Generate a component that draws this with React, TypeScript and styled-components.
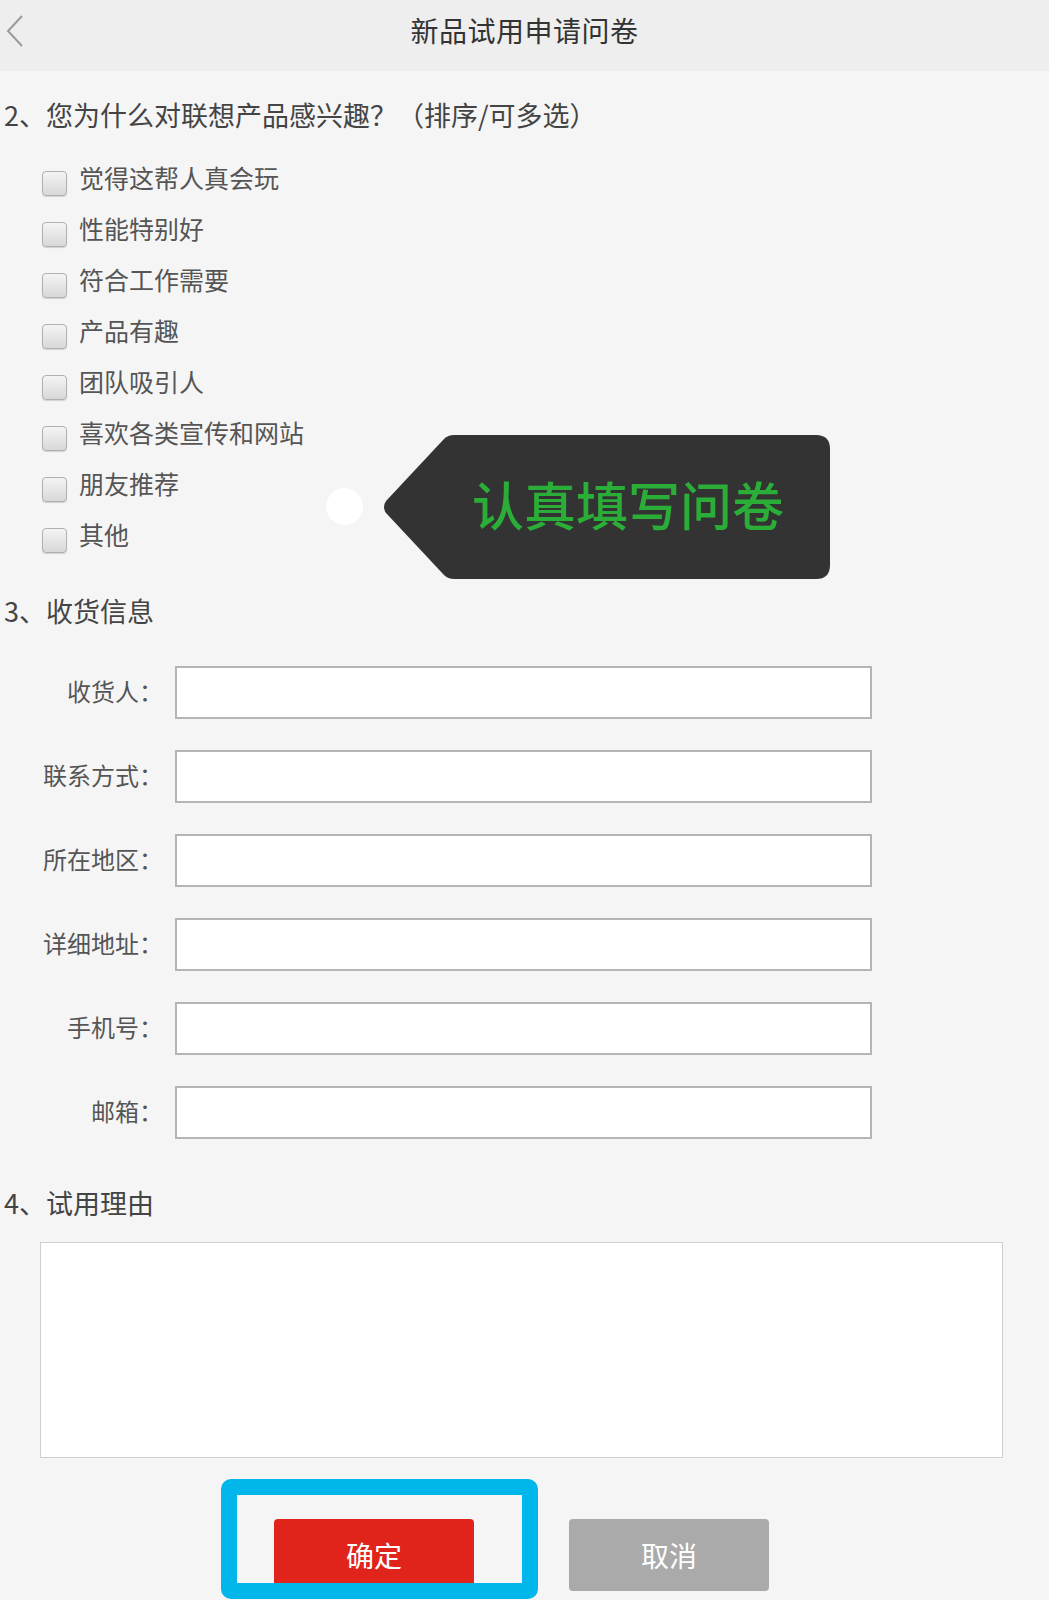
import { createGlobalStyle, styled } from "styled-components";

const GlobalStyle = createGlobalStyle`
  html, body {
    margin: 0;
    padding: 0;
    background: #f5f5f5;
  }
  body {
    font-family: "Noto Sans CJK SC", "Noto Sans", "Liberation Sans", sans-serif;
  }
`;

const Page = styled.div`
  width: 1049px;
  height: 1600px;
  overflow: hidden;
  background: #f5f5f5;
  display: flex;
  flex-direction: column;
`;

const Header = styled.div`
  height: 71px;
  flex-shrink: 0;
  background: #eeeeee;
  position: relative;
  display: flex;
  align-items: center;
  justify-content: center;
`;

const BackIcon = styled.svg`
  position: absolute;
  left: 4px;
  top: 14px;
`;

const HeaderTitle = styled.div`
  font-size: 28px;
  color: #333;
  letter-spacing: 0.5px;
  margin-bottom: 12px;
`;

const Question = styled.div<{ mt: number }>`
  margin-top: ${({ mt }) => mt}px;
  padding-left: 4px;
  height: 40px;
  line-height: 40px;
  font-size: 27px;
  color: #444;
`;

const Options = styled.div`
  position: relative;
  margin-top: 23px;
  display: flex;
  flex-direction: column;
`;

const OptionRow = styled.label`
  height: 51px;
  display: flex;
  align-items: center;
  padding-left: 42px;
  gap: 12px;
  font-size: 25px;
  color: #555;
`;

const OptionText = styled.span`
  margin-bottom: 13px;
`;

const CheckBox = styled.span`
  width: 23px;
  height: 23px;
  border: 1px solid #b0b0b0;
  border-radius: 4px;
  background: linear-gradient(#f4f4f4, #d8d8d8);
  box-shadow: 0 1px 1px rgba(0, 0, 0, 0.15);
  flex-shrink: 0;
`;

const Hole = styled.div`
  position: absolute;
  left: 326px;
  top: 330px;
  width: 37px;
  height: 37px;
  border-radius: 50%;
  background: #fff;
`;

const Tag = styled.div`
  position: absolute;
  left: 382px;
  top: 277px;
  width: 448px;
  height: 144px;
  display: flex;
  align-items: center;
  padding-left: 90px;
  box-sizing: border-box;
`;

const TagShape = styled.svg`
  position: absolute;
  left: 0;
  top: 0;
`;

const TagText = styled.span`
  position: relative;
  margin-bottom: 8px;
  font-size: 52px;
  font-weight: 500;
  color: #2bae38;
`;

const Form = styled.div`
  margin-top: 35px;
  display: flex;
  flex-direction: column;
  gap: 31px;
`;

const FieldRow = styled.div`
  display: flex;
  align-items: center;
  gap: 12px;
`;

const FieldLabel = styled.div`
  width: 163px;
  text-align: right;
  font-size: 24px;
  color: #555;
  margin-bottom: 4px;
`;

const Input = styled.div`
  width: 697px;
  height: 53px;
  box-sizing: border-box;
  border: 2px solid #b5b5b5;
  background: #fff;
`;

const TextArea = styled.div`
  margin: 19px 0 0 40px;
  width: 963px;
  height: 216px;
  box-sizing: border-box;
  border: 1px solid #cfcfcf;
  background: #fff;
`;

const Buttons = styled.div`
  margin-top: 61px;
  display: flex;
  justify-content: center;
  gap: 95px;
  padding-right: 6px;
`;

const Button = styled.div<{ bg: string }>`
  position: relative;
  width: 200px;
  height: 72px;
  border-radius: 4px;
  background: ${({ bg }) => bg};
  color: #fff;
  font-size: 28px;
  display: flex;
  align-items: center;
  justify-content: center;
`;

const Highlight = styled.div`
  position: absolute;
  left: -53px;
  top: -40px;
  width: 317px;
  height: 120px;
  box-sizing: border-box;
  border: 16px solid #00b6ea;
  border-radius: 10px;
`;

const options = [
  "觉得这帮人真会玩",
  "性能特别好",
  "符合工作需要",
  "产品有趣",
  "团队吸引人",
  "喜欢各类宣传和网站",
  "朋友推荐",
  "其他",
];

const fields = ["收货人：", "联系方式：", "所在地区：", "详细地址：", "手机号：", "邮箱："];

export default function App() {
  return (
    <>
      <GlobalStyle />
      <Page>
        <Header>
          <BackIcon width="22" height="34" viewBox="0 0 22 34">
            <path d="M18 2 L4 17 L18 32" fill="none" stroke="#9a9a9a" strokeWidth="2" />
          </BackIcon>
          <HeaderTitle>新品试用申请问卷</HeaderTitle>
        </Header>

        <Question mt={24}>2、您为什么对联想产品感兴趣？（排序/可多选）</Question>
        <Options>
          {options.map((o) => (
            <OptionRow key={o}>
              <CheckBox />
              <OptionText>{o}</OptionText>
            </OptionRow>
          ))}
          <Hole />
          <Tag>
            <TagShape width="448" height="144" viewBox="0 0 448 144">
              <path
                d="M4 78 Q0 72 4 66 L62 4 Q66 0 72 0 H434 Q448 0 448 14 V130 Q448 144 434 144 H72 Q66 144 62 140 Z"
                fill="#333333"
              />
            </TagShape>
            <TagText>认真填写问卷</TagText>
          </Tag>
        </Options>

        <Question mt={25}>3、收货信息</Question>
        <Form>
          {fields.map((f) => (
            <FieldRow key={f}>
              <FieldLabel>{f}</FieldLabel>
              <Input />
            </FieldRow>
          ))}
        </Form>

        <Question mt={44}>4、试用理由</Question>
        <TextArea />

        <Buttons>
          <Button bg="#e0241b">
            确定
            <Highlight />
          </Button>
          <Button bg="#aaaaaa">取消</Button>
        </Buttons>
      </Page>
    </>
  );
}
